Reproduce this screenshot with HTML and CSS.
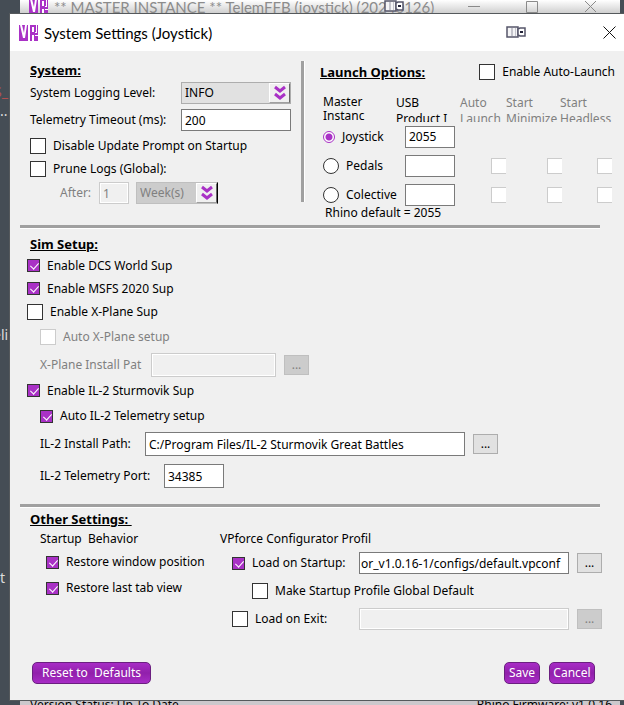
FILE: index.html
```html
<!DOCTYPE html>
<html lang="en">
<head>
  <meta charset="UTF-8">
  <title>System Settings (Joystick)</title>
  <link rel="stylesheet" href="styles.css">
</head>
<body>

  <svg class="defs" width="0" height="0" aria-hidden="true">
    <symbol id="logo" viewBox="0 0 19 16">
      <path fill="#a931c6" d="M0 0h9v16H0zM11 0h8v16h-8z"/>
      <path fill="#fff" d="M1 0h2l2 8 1-8h2L6 13H4zM13 2h2v5h-2zM13 10h2v6h-2zM17 0h1v8h-2v-1h1zM16 10h3v1h-3z"/>
    </symbol>
    <symbol id="chevrons" viewBox="0 0 12 16">
      <path fill="none" stroke="#a931c6" stroke-width="3" d="M1 2l5 4 5-4M1 9l5 4 5-4"/>
    </symbol>
    <symbol id="device" viewBox="0 0 20 13">
      <path fill="#f4f4f6" stroke="#55556a" stroke-width="1.500" d="M1 1h11v10H1z"/>
      <path fill="#c4c4cc" d="M5 2h2v8H5zM9 2h1v8H9z"/>
      <path fill="#fff" stroke="#55556a" stroke-width="1.500" d="M12 3l2-1h5v8h-5l-2-1z"/>
      <path fill="#222238" d="M14 5h3v2h-3z"/>
    </symbol>
  </svg>

  <!-- main window behind the dialog -->
  <div class="desktop" aria-hidden="true">
    <span class="log log-red">S_</span>
    <span class="log log-dots">..</span>
    <span class="log log-eli">eli</span>
    <span class="log log-t">t</span>
    <div class="main-window">
      <div class="main-title">
        <svg class="logo"><use href="#logo"/></svg>
        <span>** MASTER INSTANCE ** TelemFFB (joystick) (20240126)</span>
        <svg class="device"><use href="#device"/></svg>
        <svg class="win-buttons" viewBox="0 0 130 14"><path fill="none" stroke="#8a8a8a" d="M0 6.500h12M58.500 1.500h11v11h-11zM117 1l11 11M128 1l-11 11"/></svg>
      </div>
      <div class="main-status"><span>Version Status: Up To Date</span><span>Rhino Firmware: v1.0.16</span></div>
    </div>
  </div>

  <form class="dialog">
    <header class="titlebar">
      <svg class="logo"><use href="#logo"/></svg>
      <h1>System Settings (Joystick)</h1>
      <svg class="device"><use href="#device"/></svg>
      <button type="button" class="close" aria-label="Close"><svg viewBox="0 0 13 13"><path stroke="#111" d="M.5.5l12 12M12.500.5l-12 12"/></svg></button>
    </header>

    <div class="top">
      <section class="system">
        <h2>System:</h2>
        <div class="row row-combo">
          <label for="loglevel">System Logging Level:</label>
          <span class="combo level">
            <select id="loglevel"><option>INFO</option></select>
            <span class="arrow"><svg><use href="#chevrons"/></svg></span>
          </span>
        </div>
        <div class="row row-sub">
          <label for="timeout">Telemetry Timeout (ms):</label>
          <input type="text" id="timeout" class="timeout" value="200">
        </div>
        <label class="row check"><input type="checkbox">Disable Update Prompt on Startup</label>
        <label class="row check"><input type="checkbox">Prune Logs (Global):</label>
        <div class="row row-combo prune disabled">
          <label for="after">After:</label>
          <input type="text" id="after" class="after" value="1" disabled>
          <span class="combo unit">
            <select aria-label="Prune unit" disabled><option>Week(s)</option></select>
            <span class="arrow"><svg><use href="#chevrons"/></svg></span>
          </span>
        </div>
      </section>

      <div class="vrule"></div>

      <section class="launch">
        <div class="launch-head">
          <h2>Launch Options:</h2>
          <label class="check"><input type="checkbox">Enable Auto-Launch</label>
        </div>
        <div class="columns">
          <span class="master">Master Instanc</span>
          <span>USB<br>Product I</span>
          <span class="disabled">Auto<br>Launch</span>
          <span class="disabled">Start<br>Minimize</span>
          <span class="disabled">Start<br>Headless</span>
        </div>
        <div class="device-row">
          <label class="check"><input type="radio" name="master" checked>Joystick</label>
          <input type="text" value="2055" aria-label="Joystick product ID">
        </div>
        <div class="device-row">
          <label class="check"><input type="radio" name="master">Pedals</label>
          <input type="text" aria-label="Pedals product ID">
          <input type="checkbox" disabled aria-label="Pedals auto launch">
          <input type="checkbox" disabled aria-label="Pedals start minimized">
          <input type="checkbox" disabled aria-label="Pedals start headless">
        </div>
        <div class="device-row">
          <label class="check"><input type="radio" name="master">Colective</label>
          <input type="text" aria-label="Collective product ID">
          <input type="checkbox" disabled aria-label="Collective auto launch">
          <input type="checkbox" disabled aria-label="Collective start minimized">
          <input type="checkbox" disabled aria-label="Collective start headless">
        </div>
        <p class="hint">Rhino default = 2055</p>
      </section>
    </div>

    <hr>

    <section class="sim">
      <h2>Sim Setup:</h2>
      <label class="row check"><input type="checkbox" checked>Enable DCS World Sup</label>
      <label class="row check"><input type="checkbox" checked>Enable MSFS 2020 Sup</label>
      <label class="row check"><input type="checkbox">Enable X-Plane Sup</label>
      <label class="row row-sub indent check disabled"><input type="checkbox" disabled>Auto X-Plane setup</label>
      <div class="row row-sub indent disabled">
        <label for="xplane" class="xplane-label">X-Plane Install Pat</label>
        <input type="text" id="xplane" class="xplane" disabled>
        <button type="button" class="browse" disabled>...</button>
      </div>
      <label class="row check"><input type="checkbox" checked>Enable IL-2 Sturmovik Sup</label>
      <label class="row row-sub indent check"><input type="checkbox" checked>Auto IL-2 Telemetry setup</label>
      <div class="row row-sub indent">
        <label for="il2path" class="il2path-label">IL-2 Install Path:</label>
        <input type="text" id="il2path" class="il2path" value="C:/Program Files/IL-2 Sturmovik Great Battles">
        <button type="button" class="browse">...</button>
      </div>
      <div class="row row-port indent">
        <label for="il2port" class="port-label">IL-2 Telemetry Port:</label>
        <input type="text" id="il2port" class="port" value="34385">
      </div>
    </section>

    <hr>

    <section class="other">
      <h2>Other Settings:&nbsp;</h2>
      <div class="other-columns">
        <div class="startup">
          <h3>Startup&nbsp; Behavior</h3>
          <label class="row row-combo check"><input type="checkbox" checked>Restore window position</label>
          <label class="row row-combo check"><input type="checkbox" checked>Restore last tab view</label>
        </div>
        <div class="profile">
          <h3>VPforce Configurator Profil</h3>
          <div class="row row-sub">
            <label class="check"><input type="checkbox" checked>Load on Startup:</label>
            <input type="text" class="conf" aria-label="Startup profile" value="or_v1.0.16-1/configs/default.vpconf">
            <button type="button" class="browse">...</button>
          </div>
          <label class="row row-sub check global"><input type="checkbox">Make Startup Profile Global Default</label>
          <div class="row row-sub">
            <label class="check"><input type="checkbox">Load on Exit:</label>
            <input type="text" class="conf" aria-label="Exit profile" disabled>
            <button type="button" class="browse" disabled>...</button>
          </div>
        </div>
      </div>
    </section>

    <footer>
      <button type="button" class="action reset">Reset to&nbsp; Defaults</button>
      <button type="submit" class="action save">Save</button>
      <button type="button" class="action cancel">Cancel</button>
    </footer>
  </form>

</body>
</html>
```
FILE: styles.css
```css
* {
  box-sizing: border-box;
}

body {
  margin: 0;
  position: relative;
  background: #454d55;
  color: #000;
  font: 12px/16px "Noto Sans", sans-serif;
  overflow: hidden;
}

.defs {
  position: absolute;
}

/* window behind */
.desktop {
  position: absolute;
  inset: 0;
  overflow: hidden;
}

.main-window {
  position: absolute;
  inset: 0 4px 0 20px;
  background: #e4e2e4;
  display: flex;
  flex-direction: column;
  justify-content: space-between;
}

.main-title {
  position: relative;
  display: flex;
  align-items: center;
  gap: 6px;
  height: 14px;
  padding-left: 9px;
  background: linear-gradient(#fff, #ccc);
  color: #8c8c8c;
  font-family: Lato, sans-serif;
  font-size: 15px;
  white-space: nowrap;
}

.main-title .device {
  position: absolute;
  left: 364px;
  top: 0;
}

.main-title .win-buttons {
  position: absolute;
  right: 22px;
  top: 0;
  width: 130px;
  height: 14px;
}

.main-status {
  display: flex;
  justify-content: space-between;
  height: 8px;
  padding: 0 8px 0 10px;
  background: #ccc8cc;
}

.log {
  position: absolute;
  left: 0;
  color: #ddd;
  font-size: 14px;
}

.log-red {
  top: 84px;
  left: -6px;
  color: #b05050;
}

.log-dots {
  top: 103px;
}

.log-eli {
  top: 327px;
  left: -7px;
}

.log-t {
  top: 570px;
}

/* dialog */
.dialog {
  position: relative;
  margin: 13px 0 4px 9px;
  border: 1px solid #55595c;
  border-right: 0;
  background: #f0f0f0;
}

.titlebar {
  display: flex;
  align-items: center;
  height: 37px;
  padding: 0 8px 0 9px;
  background: #fff;
}

.logo {
  width: 19px;
  height: 16px;
  flex: none;
}

.device {
  width: 20px;
  height: 13px;
  flex: none;
}

h1 {
  flex: 1;
  margin: 0 0 0 6px;
  font-family: Lato, sans-serif;
  font-size: 15px;
  font-weight: normal;
}

.close {
  width: 13px;
  height: 13px;
  margin-left: 77px;
  padding: 0;
  border: 0;
  background: none;
}

.close svg {
  display: block;
}

h2 {
  margin: 0;
  height: 20px;
  font-size: 13px;
  line-height: 20px;
  text-decoration: underline;
}

h3 {
  margin: 0;
  height: 20px;
  font-size: 12px;
  font-weight: normal;
  line-height: 20px;
}

.row {
  display: flex;
  align-items: center;
  height: 23px;
  white-space: nowrap;
}

.row-combo {
  height: 26px;
}

.row-sub {
  height: 28px;
}

.row-port {
  height: 36px;
}

.indent {
  padding-left: 13px;
}

.check {
  display: flex;
  align-items: center;
  gap: 7px;
}

.disabled {
  color: #808080;
}

/* controls */
input[type="text"] {
  height: 22px;
  padding: 0 3px;
  border: 1px solid #7a7a7a;
  border-radius: 0;
  background: #fff;
  color: #000;
  font: inherit;
}

input[type="text"]:disabled {
  border-color: #ccc;
  background: #f0f0f0;
  box-shadow: inset 0 0 0 1px #fff;
  color: #808080;
}

input[type="checkbox"] {
  appearance: none;
  position: relative;
  flex: none;
  width: 16px;
  height: 16px;
  margin: 0;
  border: 1px solid #333;
  background: #fff;
}

input[type="checkbox"]:checked {
  width: 13px;
  height: 13px;
  background: #a931c6;
}

input[type="checkbox"]:checked::after {
  content: "";
  position: absolute;
  left: 4px;
  top: 1px;
  width: 4px;
  height: 7px;
  border: solid #fff;
  border-width: 0 1px 1px 0;
  transform: rotate(42deg);
}

input[type="checkbox"]:disabled {
  border-color: #ccc;
}

input[type="radio"] {
  appearance: none;
  flex: none;
  width: 16px;
  height: 16px;
  margin: 0;
  border: 1px solid #333;
  border-radius: 50%;
  background: #fff;
}

input[type="radio"]:checked {
  width: 12px;
  height: 12px;
  border-color: #a931c6;
  background: radial-gradient(circle, #a931c6 3px, #fff 4px);
}

.combo {
  display: flex;
  height: 22px;
  border: 1px solid #adadad;
}

.combo select {
  appearance: none;
  flex: 1;
  padding: 0 3px;
  border: 0;
  border-radius: 0;
  background: #e1e1e1;
  color: #000;
  font: inherit;
  opacity: 1;
}

.combo select:disabled {
  background: #ccc;
  color: #808080;
}

.arrow {
  display: flex;
  align-items: center;
  justify-content: center;
  width: 21px;
  background: #f0f0f0;
  border: 1px solid #fff;
  border-right-color: #696969;
  border-bottom-color: #a0a0a0;
}

.arrow svg {
  width: 12px;
  height: 16px;
}

.browse {
  width: 25px;
  height: 20px;
  margin-left: 8px;
  padding: 0;
  border: 1px solid #adadad;
  background: #e1e1e1;
  color: #000;
  font: inherit;
}

.browse:disabled {
  border-color: #bfbfbf;
  background: #ccc;
  color: #808080;
}

/* top part */
.top {
  display: flex;
  padding: 9px 9px 0 20px;
}

.system {
  flex: none;
  width: 261px;
}

.system .row {
  justify-content: space-between;
}

.system .check {
  justify-content: flex-start;
}

.level,
.timeout {
  width: 110px;
}

.system .prune {
  justify-content: flex-start;
  padding-left: 30px;
}

.after {
  width: 30px;
  margin: 0 7px 0 8px;
}

.unit {
  width: 82px;
  border-color: #bfbfbf;
  border-right-color: #000;
}

.vrule {
  flex: none;
  width: 4px;
  height: 141px;
  margin: 1px 15px 0 10px;
  border-left: 3px solid #a0a0a0;
  border-right: 1px solid #fff;
}

.launch {
  flex: 1;
  min-width: 0;
  height: 165px;
}

.launch-head {
  display: flex;
  align-items: center;
  justify-content: space-between;
  height: 24px;
  white-space: nowrap;
}

.columns {
  display: grid;
  grid-template-columns: 73px 64px 46px 54px 1fr;
  height: 27px;
  margin: 11px 0 0 3px;
  overflow: hidden;
  white-space: nowrap;
}

.columns .master {
  width: 48px;
  line-height: 14px;
  white-space: normal;
}

.device-row {
  display: grid;
  grid-template-columns: 82px 86px 56px 50px 16px;
  align-items: center;
  height: 29px;
  padding-left: 3px;
}

.device-row input[type="text"] {
  width: 50px;
}

.device-row input[type="checkbox"] {
  width: 15px;
  border-right: 0;
}

.hint {
  margin: -4px 0 0 5px;
}

hr {
  height: 4px;
  margin: 0 24px 0 10px;
  border: 0;
  border-top: 3px solid #a0a0a0;
  border-bottom: 1px solid #fff;
}

/* sims */
.sim {
  padding: 5px 24px 10px 17px;
}

.sim h2 {
  padding-left: 3px;
}

.sim input[type="text"] {
  height: 24px;
}

.xplane-label {
  width: 104px;
}

.xplane {
  width: 125px;
  margin-left: 7px;
}

.il2path-label {
  width: 105px;
}

.il2path {
  width: 320px;
}

.port-label {
  width: 124px;
}

.port {
  width: 60px;
}

/* other */
.other {
  padding: 1px 22px 0 20px;
}

.other-columns {
  display: flex;
}

.startup {
  width: 190px;
  padding-left: 10px;
}

.startup .row {
  padding-left: 6px;
}

.profile .row {
  padding-left: 12px;
}

.profile .row > .check {
  width: 127px;
}

.profile .global {
  padding-left: 32px;
}

.conf {
  width: 210px;
}

.conf[value] {
  padding: 0 1px;
}

footer {
  display: flex;
  align-items: center;
  padding: 29px 29px 16px 22px;
}

.action {
  height: 22px;
  padding: 0;
  border: 1px solid #6b1f80;
  border-radius: 5px;
  background: linear-gradient(#a82cc6, #9120ab 50%, #a82cc6);
  color: #fff;
  font: inherit;
}

.reset {
  width: 119px;
  margin-right: auto;
}

.save {
  width: 36px;
  margin-right: 9px;
}

.cancel {
  width: 46px;
}
```
